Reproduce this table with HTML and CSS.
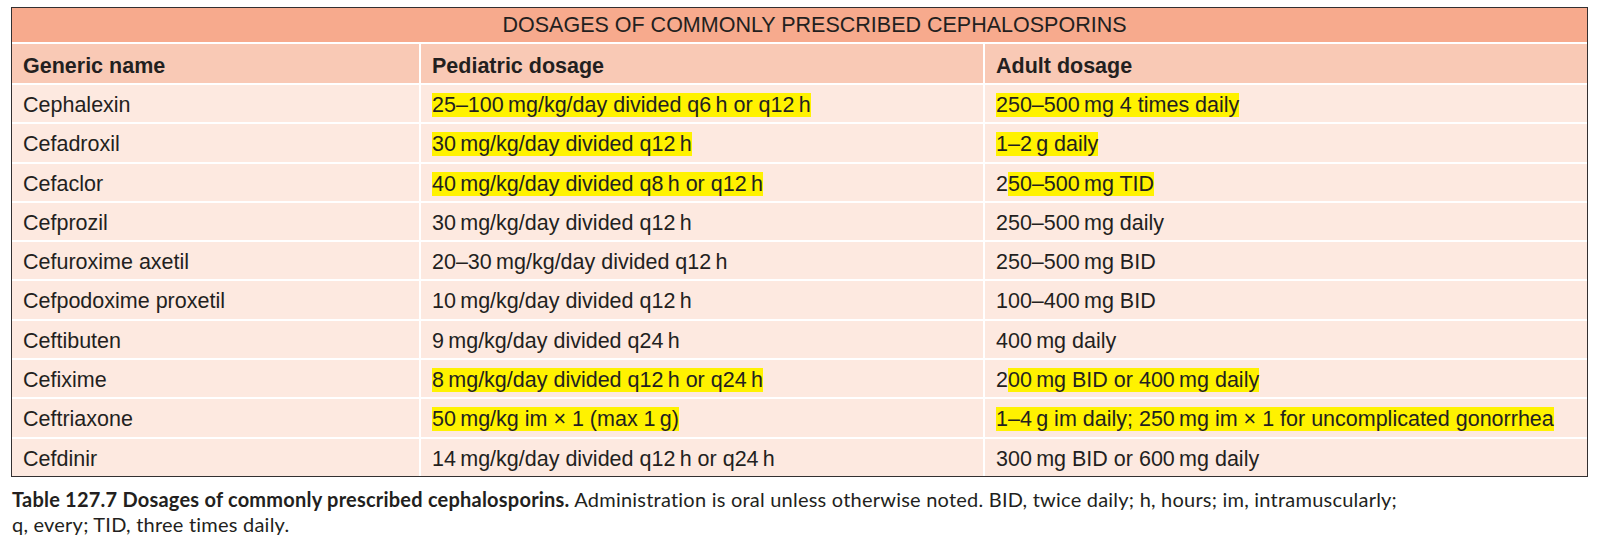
FILE: index.html
```html
<!DOCTYPE html>
<html lang="en">
<head>
<meta charset="utf-8">
<title>Dosages of commonly prescribed cephalosporins</title>
<link rel="stylesheet" href="styles.css">
</head>
<body>
<div class="figure">
  <table class="dose-table">
    <colgroup>
      <col class="c1"><col class="c2"><col class="c3">
    </colgroup>
    <thead>
      <tr class="title-row"><th colspan="3">DOSAGES OF COMMONLY PRESCRIBED CEPHALOSPORINS</th></tr>
      <tr class="head-row"><th>Generic name</th><th>Pediatric dosage</th><th>Adult dosage</th></tr>
    </thead>
    <tbody>
      <tr><td>Cephalexin</td><td><span class="hl">25–100&#8201;mg/kg/day divided q6&#8201;h or q12&#8201;h</span></td><td><span class="hl">250–500&#8201;mg 4 times daily</span></td></tr>
      <tr><td>Cefadroxil</td><td><span class="hl">30&#8201;mg/kg/day divided q12&#8201;h</span></td><td><span class="hl">1–2&#8201;g daily</span></td></tr>
      <tr><td>Cefaclor</td><td><span class="hl">40&#8201;mg/kg/day divided q8&#8201;h or q12&#8201;h</span></td><td>2<span class="hl">50–500&#8201;mg TID</span></td></tr>
      <tr><td>Cefprozil</td><td>30&#8201;mg/kg/day divided q12&#8201;h</td><td>250–500&#8201;mg daily</td></tr>
      <tr><td>Cefuroxime axetil</td><td>20–30&#8201;mg/kg/day divided q12&#8201;h</td><td>250–500&#8201;mg BID</td></tr>
      <tr><td>Cefpodoxime proxetil</td><td>10&#8201;mg/kg/day divided q12&#8201;h</td><td>100–400&#8201;mg BID</td></tr>
      <tr><td>Ceftibuten</td><td>9&#8201;mg/kg/day divided q24&#8201;h</td><td>400&#8201;mg daily</td></tr>
      <tr><td>Cefixime</td><td><span class="hl">8&#8201;mg/kg/day divided q12&#8201;h or q24&#8201;h</span></td><td>2<span class="hl">00&#8201;mg BID or 400&#8201;mg daily</span></td></tr>
      <tr><td>Ceftriaxone</td><td><span class="hl">50&#8201;mg/kg im × 1 (max 1&#8201;g)</span></td><td><span class="hl">1–4&#8201;g im daily; 250&#8201;mg im × 1 for uncomplicated gonorrhea</span></td></tr>
      <tr><td>Cefdinir</td><td>14&#8201;mg/kg/day divided q12&#8201;h or q24&#8201;h</td><td>300&#8201;mg BID or 600&#8201;mg daily</td></tr>
    </tbody>
  </table>
  <p class="caption"><strong>Table 127.7 Dosages of commonly prescribed cephalosporins.</strong> Administration is oral unless otherwise noted. BID, twice daily; h, hours; im, intramuscularly;<br>q, every; TID, three times daily.</p>
</div>
</body>
</html>
```

FILE: styles.css
```css
html, body {
  margin: 0;
  padding: 0;
  background: #ffffff;
}

.figure {
  padding: 7px 0 0 11px;
}

.dose-table {
  width: 1577px;
  table-layout: fixed;
  border-collapse: separate;
  border-spacing: 0;
  border: 1px solid #333031;
  font-family: "Liberation Sans", Arial, sans-serif;
  font-size: 21.5px;
  color: #231f20;
}

.c1 { width: 407px; }
.c2 { width: 564px; }
.c3 { width: auto; }

.dose-table th,
.dose-table td {
  text-align: left;
  vertical-align: top;
  line-height: 25px;
  padding: 8px 8px 4.3px 11px;
  white-space: nowrap;
}

.dose-table th + th,
.dose-table td + td {
  border-left: 2px solid #ffffff;
}

.title-row th {
  background: #f7aa8d;
  text-align: center;
  font-weight: normal;
  padding: 5px 0 4px 30px;
}

.head-row th {
  background: #f9c9b5;
  font-weight: bold;
  border-top: 2px solid #ffffff;
  padding-top: 10px;
  padding-bottom: 4px;
}

.dose-table tbody td {
  background: #fde9e0;
  border-top: 2px solid #ffffff;
}

.hl {
  background: #fff200;
}

.caption {
  margin: 10px 0 0 1px;
  font-family: "Lato", "Open Sans", sans-serif;
  font-size: 20px;
  line-height: 25.5px;
  color: #231f20;
  font-variant-ligatures: none;
  font-feature-settings: "liga" 0;
  letter-spacing: 0.22px;
}

.caption strong {
  font-weight: bold;
}
```
